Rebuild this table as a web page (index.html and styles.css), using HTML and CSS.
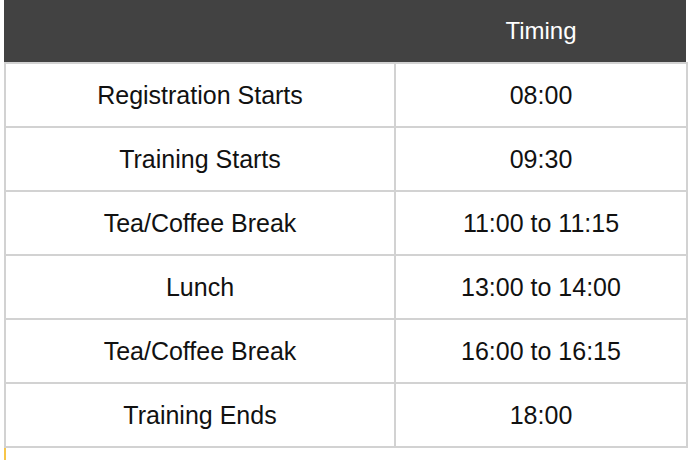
FILE: index.html
```html
<!DOCTYPE html>
<html>
<head>
<meta charset="utf-8">
<link rel="stylesheet" href="styles.css">
</head>
<body>
<div class="wrap">
  <table class="schedule">
    <thead>
      <tr><th class="c1"></th><th class="c2">Timing</th></tr>
    </thead>
    <tbody>
      <tr><td class="c1">Registration Starts</td><td class="c2">08:00</td></tr>
      <tr><td class="c1">Training Starts</td><td class="c2">09:30</td></tr>
      <tr><td class="c1">Tea/Coffee Break</td><td class="c2">11:00 to 11:15</td></tr>
      <tr><td class="c1">Lunch</td><td class="c2">13:00 to 14:00</td></tr>
      <tr><td class="c1">Tea/Coffee Break</td><td class="c2">16:00 to 16:15</td></tr>
      <tr><td class="c1">Training Ends</td><td class="c2">18:00</td></tr>
    </tbody>
  </table>
  <div class="next"></div>
</div>
</body>
</html>
```
FILE: styles.css
```css
html, body {
  margin: 0;
  padding: 0;
  background: #ffffff;
}
body {
  font-family: "Liberation Sans", Arial, Helvetica, sans-serif;
  color: #111111;
}
.wrap {
  padding-left: 4px;
}
.schedule {
  border-collapse: separate;
  border-spacing: 0;
  table-layout: fixed;
  width: 684px;
}
.schedule th {
  background: #424242;
  color: #ffffff;
  font-weight: normal;
  font-size: 24px;
  height: 62px;
  padding: 0;
  text-align: center;
  vertical-align: middle;
  box-sizing: border-box;
}
.schedule th.c1 { width: 392px; }
.schedule th.c2 { border-right: 2px solid #ffffff; }
.schedule td {
  font-size: 25px;
  height: 64px;
  padding: 0;
  text-align: center;
  vertical-align: middle;
  border-right: 2px solid #d2d2d2;
  border-bottom: 2px solid #d2d2d2;
  box-sizing: border-box;
}
.schedule tbody tr:first-child td {
  border-top: 2px solid #d2d2d2;
  height: 66px;
}
.schedule td.c1 {
  border-left: 2px solid #d2d2d2;
}
.next {
  height: 20px;
  border-left: 2px solid #f7c548;
}
```
